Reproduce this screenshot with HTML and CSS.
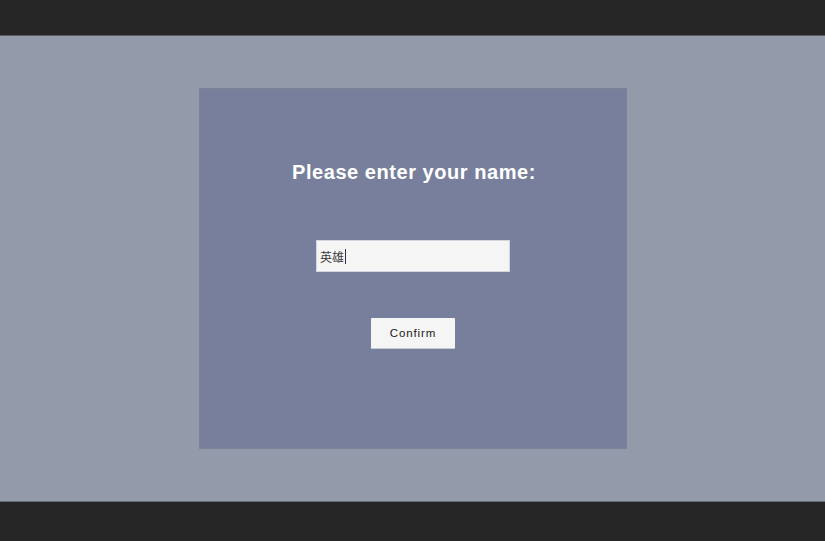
FILE: index.html
```html
<!DOCTYPE html>
<html lang="en">
<head>
<meta charset="utf-8">
<title>Enter name</title>
<link rel="stylesheet" href="styles.css">
</head>
<body>
<div class="screen">
  <div class="bar-top"></div>
  <main class="stage">
    <section class="panel">
      <h1 class="title">Please enter your name:</h1>
      <div class="field"><span class="value">英雄</span><span class="caret"></span></div>
      <button class="confirm" type="button">Confirm</button>
    </section>
  </main>
  <div class="bar-bottom"></div>
</div>
</body>
</html>
```
FILE: styles.css
```css
html, body {
  margin: 0;
  padding: 0;
  width: 825px;
  height: 541px;
  overflow: hidden;
  background: #262626;
  font-family: "Liberation Sans", Arial, "Noto Sans CJK SC", sans-serif;
}
.screen {
  display: flex;
  flex-direction: column;
  width: 825px;
  height: 541px;
}
.bar-top {
  height: 36px;
  background: #262626;
  border-bottom: 1px solid #5a5c62;
  box-sizing: border-box;
}
.bar-bottom {
  height: 40px;
  background: #262626;
  border-top: 1px solid #6a6d75;
  box-sizing: border-box;
}
.stage {
  flex: 1;
  background: #939aa9;
  display: flex;
  justify-content: center;
  align-items: center;
  padding-left: 1px;
}
.panel {
  width: 428px;
  height: 361px;
  box-sizing: border-box;
  background: #787f9c;
  border: 1px solid #7c8298;
  display: flex;
  flex-direction: column;
  align-items: center;
}
.title {
  margin: 71px 0 0 0;
  color: #ffffff;
  font-size: 20px;
  font-weight: bold;
  letter-spacing: 0.55px;
  line-height: 24px;
  padding-left: 2px;
}
.field {
  margin-top: 56px;
  width: 194px;
  height: 32px;
  box-sizing: border-box;
  background: #f5f5f5;
  border: 1px solid #d4d6de;
  display: flex;
  align-items: center;
  padding-left: 3px;
  color: #3a3a3a;
  font-family: "Noto Sans CJK SC", sans-serif;
  font-size: 12px;
}
.caret {
  display: inline-block;
  width: 1px;
  height: 15px;
  background: #333;
  margin-left: 1px;
}
.confirm {
  margin-top: 46px;
  width: 84px;
  height: 31px;
  box-sizing: border-box;
  background: #f5f5f5;
  border: none;
  border-bottom: 1px solid #c9cbd2;
  border-radius: 1px;
  color: #1a1a1a;
  font-family: "Liberation Sans", Arial, sans-serif;
  font-size: 11.5px;
  letter-spacing: 0.9px;
  padding: 0;
}
```
